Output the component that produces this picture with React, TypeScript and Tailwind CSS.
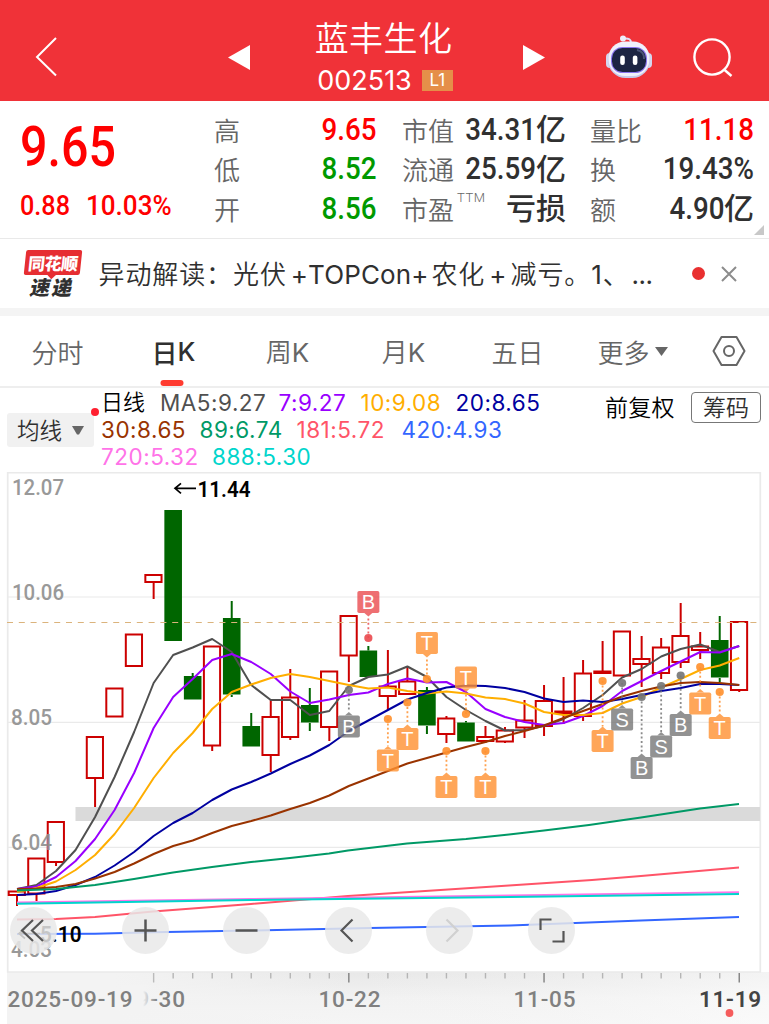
import type { ReactNode } from "react";

type Candle = { up: boolean; open: number; close: number; high?: number; low?: number };
type Marker = { i: number; y: number; dot: number; label: "B" | "S" | "T"; color: string };

const STEP = 19.52;
const px = (i: number) => 17 + i * STEP;

const r = (open: number, close: number, high?: number, low?: number): Candle => ({ up: true, open, close, high, low });
const g = (open: number, close: number, high?: number, low?: number): Candle => ({ up: false, open, close, high, low });

const candles: Candle[] = [
  r(891.5, 895, undefined, 906), r(858.5, 893.5, undefined, 901), r(822, 862, undefined, 866), r(781, 781),
  r(737, 778, undefined, 807), r(688.5, 716.5), r(634.5, 666), r(575, 582, undefined, 599), g(510, 641.5),
  g(676, 700, 673), r(646.5, 745.5, undefined, 751), g(618, 695, 601, 697), g(726, 747, 713),
  r(717, 755, 700, 772), r(697.5, 737, 669, 740), g(705, 723, 688, 731), r(671.5, 727, undefined, 741),
  r(616, 655.5, undefined, 682), g(650.5, 677.5, 646), r(686.5, 696, 650, 710), r(681.5, 694, 666),
  g(690, 726, 687, 734), r(718.5, 734, 716, 743), g(722.5, 742, 721), r(737, 741, 726, 743),
  r(730.5, 741.5, 727, 743), r(720.5, 727.5, 700, 738), r(701, 726, 685, 736), r(711.5, 713, 677, 724),
  r(673.5, 716, 660, 721), r(671.5, 673, 641), r(631.5, 675.5), r(659, 664, 636, 687), r(647.5, 673, 638, 679),
  r(636, 662, 603, 668), r(646.5, 650, 632, 659), g(640, 678, 616, 682), r(622, 690, undefined, 692),
];

const averages: { color: string; ys: number[] }[] = [
  { color: "#505050", ys: [889, 885, 871, 850, 817, 777, 732, 683, 655, 647.5, 639, 652, 685, 700, 700, 715, 711, 686, 677, 674.5, 666.5, 677, 697, 710, 721, 730.5, 730, 726, 719, 708, 695, 677.5, 669, 656.5, 649, 644.5, 652, 646] },
  { color: "#9900ff", ys: [889, 886.5, 877, 861, 839, 810, 773, 728, 697, 679, 660, 654, 662, 674, 691.5, 703, 699.5, 695, 692.5, 684, 678.5, 682.5, 682, 692, 709, 717, 722, 725, 723, 716, 706, 691, 681, 671, 661.5, 652, 652.5, 646] },
  { color: "#ffae00", ys: [892, 888, 881.5, 870, 855, 834, 808, 778, 753, 733, 709, 692, 684.5, 678, 674, 677, 681, 685, 688.5, 687.5, 691, 693.5, 691.5, 693.5, 697.5, 699, 703.5, 712, 715, 715, 713, 703.5, 697, 687.5, 679, 670, 665.5, 658] },
  { color: "#0000a0", ys: [895, 894, 891, 885, 877, 865.5, 852, 836, 823, 813, 800, 789.5, 782, 773.5, 764, 755.5, 745, 731, 720.5, 710, 699.5, 693, 687.5, 685.5, 686, 688, 692, 698.5, 702, 700.5, 702, 699, 695, 691, 688, 684, 684, 685] },
  { color: "#993300", ys: [889, 888.5, 887, 884, 878.5, 872, 863.5, 854, 846, 840.5, 833, 826, 821, 815.5, 809, 803, 795.5, 786, 778.5, 771, 763.5, 758, 752.5, 747, 742, 736, 731, 725.5, 718, 711, 704, 696.5, 691, 686.5, 683, 682, 683, 685] },
];

const longAverages = [
  { color: "#009966", points: "17,890.5 56,889 95,885 134,879 173,872.5 212,867 251,862 290,858 329,853.5 348,850.5 407,843.5 466,839 509,834.5 544,830.5 589,825 641,817.5 700,808.5 739,804" },
  { color: "#ff5468", points: "17,919.5 56,919 95,917 153,911.5 212,907 251,904 348,896 410,892 509,885.5 592,880 641,876 739,867.5" },
  { color: "#ff73e8", points: "17,902.5 251,899 510,895.5 739,892.3" },
  { color: "#00d5cc", points: "17,903.7 251,900 510,897 739,894" },
  { color: "#3366ff", points: "17,934 95,933.7 153,932.2 251,930.5 370,928 510,925.5 641,920.5 739,917" },
];

const ORANGE = "#ff9130";
const GRAY = "#777777";
const markers: Marker[] = [
  { i: 18, y: 602, dot: 638, label: "B", color: "#ea4c50" },
  { i: 21, y: 643, dot: 679, label: "T", color: ORANGE },
  { i: 23, y: 677.5, dot: 714, label: "T", color: ORANGE },
  { i: 17, y: 726.5, dot: 690, label: "B", color: GRAY },
  { i: 19, y: 760.5, dot: 719, label: "T", color: ORANGE },
  { i: 20, y: 739, dot: 702.5, label: "T", color: ORANGE },
  { i: 22, y: 787, dot: 751, label: "T", color: ORANGE },
  { i: 24, y: 787, dot: 751, label: "T", color: ORANGE },
  { i: 30, y: 741, dot: 681, label: "T", color: ORANGE },
  { i: 31, y: 719.5, dot: 683, label: "S", color: GRAY },
  { i: 32, y: 768, dot: 697, label: "B", color: GRAY },
  { i: 33, y: 746.5, dot: 686, label: "S", color: GRAY },
  { i: 34, y: 725, dot: 675.5, label: "B", color: GRAY },
  { i: 35, y: 703.5, dot: 667, label: "T", color: ORANGE },
  { i: 36, y: 728, dot: 692, label: "T", color: ORANGE },
];

function CandleShape({ i, c }: { i: number; c: Candle }) {
  const x = px(i);
  const color = c.up ? "#cc0000" : "#006600";
  return (
    <g stroke={color} strokeWidth={2}>
      {c.high !== undefined && <line x1={x} x2={x} y1={c.high} y2={c.open} />}
      {c.low !== undefined && <line x1={x} x2={x} y1={c.close} y2={c.low} />}
      {c.up ? (
        <rect x={x - 8.3} y={c.open} width={16.2} height={c.close - c.open} fill="#fff" />
      ) : (
        <rect x={x - 8.8} y={c.open} width={17.6} height={c.close - c.open - 0.5} fill={color} stroke="none" />
      )}
    </g>
  );
}

function MarkerShape({ m }: { m: Marker }) {
  const x = px(m.i);
  const above = m.y < m.dot;
  const edge = above ? m.y + 11 : m.y - 11;
  const tip = above ? edge + 3.5 : edge - 3.5;
  return (
    <g>
      <line x1={x} x2={x} y1={m.dot} y2={tip} stroke={m.color} strokeWidth={1.8} strokeDasharray="2 2.4" opacity={0.85} />
      <circle cx={x} cy={m.dot} r={4.1} fill={m.color} opacity={0.92} />
      <g fill={m.color} opacity={0.8}>
        <rect x={x - 11} y={m.y - 11} width={22} height={22} rx={1.8} />
        <path d={`M${x - 4} ${edge}L${x} ${tip}L${x + 4} ${edge}Z`} />
      </g>
      <text x={x} y={m.y + 7} textAnchor="middle" fontSize={20} fill="#fff" className="font-['Liberation_Sans',sans-serif]">
        {m.label}
      </text>
    </g>
  );
}

type ChartTextProps = { x: number; y: number; w: number; color: string; children: string; bold?: boolean; spaced?: boolean };

function ChartText({ x, y, w, color, children, bold, spaced }: ChartTextProps) {
  return (
    <text
      x={x}
      y={y}
      textLength={w}
      lengthAdjust={spaced ? "spacing" : "spacingAndGlyphs"}
      fontSize={22.5}
      fill={color}
      fontWeight={bold ? 600 : 500}
      className="font-[Roboto,sans-serif]"
    >
      {children}
    </text>
  );
}

function Chart() {
  return (
    <svg width="769" height="552" viewBox="0 472 769 552" className="block">
      <defs>
        <linearGradient id="axis" x1="0" y1="0" x2="0" y2="1">
          <stop offset="0" stopColor="#e8e8e8" />
          <stop offset="0.5" stopColor="#f2f2f2" />
          <stop offset="1" stopColor="#f5f5f5" />
        </linearGradient>
        <linearGradient id="axisFade" x1="0" y1="0" x2="1" y2="0">
          <stop offset="0" stopColor="#f3f3f3" />
          <stop offset="0.14" stopColor="#f3f3f3" />
          <stop offset="0.45" stopColor="#f3f3f3" stopOpacity="0" />
          <stop offset="1" stopColor="#fff" stopOpacity="0.5" />
        </linearGradient>
        <linearGradient id="dateFade" x1="0" y1="0" x2="1" y2="0">
          <stop offset="0.6" stopColor="#f3f3f3" />
          <stop offset="1" stopColor="#f3f3f3" stopOpacity="0" />
        </linearGradient>
      </defs>
      <rect x="7" y="972" width="762" height="52" fill="url(#axis)" />
      <rect x="7" y="972" width="762" height="52" fill="url(#axisFade)" />
      <g stroke="#eaeaea">
        <path d="M7 597H760M7 722.3H760M7 847.3H760" strokeWidth="1.2" />
        <path d="M7.7 472.6H760.3V972H7.7Z" fill="none" strokeWidth="1.7" />
      </g>
      {candles.map((c, i) => <CandleShape key={i} i={i} c={c} />)}
      <rect x="75.5" y="807" width="684.5" height="14" fill="#dadada" />
      <line x1="7" x2="760" y1="622.5" y2="622.5" stroke="#dbb37c" strokeWidth="1.1" strokeDasharray="6 5.8" />
      <g fill="none" strokeWidth="2" strokeLinejoin="round">
        {averages.map((a) => (
          <polyline key={a.color} stroke={a.color} points={a.ys.map((y, i) => `${px(i)},${y}`).join(" ")} />
        ))}
        {longAverages.map((a) => <polyline key={a.color} stroke={a.color} points={a.points} />)}
      </g>
      {markers.map((m) => <MarkerShape key={m.i} m={m} />)}

      <g opacity="0.9">
        <ChartText x={12} y={494.5} w={52} color="#8f8f8f">12.07</ChartText>
        <ChartText x={12} y={600} w={52} color="#8f8f8f">10.06</ChartText>
        <ChartText x={11} y={725} w={41} color="#8f8f8f">8.05</ChartText>
        <ChartText x={11} y={850} w={41} color="#8f8f8f">6.04</ChartText>
        <ChartText x={11} y={956.5} w={41} color="#8f8f8f">4.03</ChartText>
      </g>
      <path d="M196 488.3H175M181 483.3L175 488.3L181 493.3" fill="none" stroke="#000" strokeWidth="1.7" />
      <ChartText x={197.5} y={496.5} w={53} color="#000" bold>11.44</ChartText>
      <path d="M40 933.5H19M25 928.5L19 933.5L25 938.5" fill="none" stroke="#000" strokeWidth="1.7" />
      <ChartText x={40} y={941.5} w={41.5} color="#000" bold>5.10</ChartText>

      <g strokeWidth="1.4">
        {candles.map((_, i) =>
          i < 7 ? null : (
            <line key={i} x1={px(i)} x2={px(i)} y1={973} y2={i % 10 === 7 ? 982.5 : 978.5} stroke={i === 7 ? "#bbbbbb" : i % 10 === 7 ? "#808080" : "#b5b5b5"} />
          ),
        )}
      </g>
      <ChartText x={123} y={1006.5} w={62} color="#808080" spaced>09-30</ChartText>
      <rect x="122" y="985" width="35" height="28" fill="url(#dateFade)" />
      <ChartText x={7.5} y={1007} w={125} color="#808080" spaced>2025-09-19</ChartText>
      <ChartText x={318.5} y={1006.5} w={62} color="#808080" spaced>10-22</ChartText>
      <ChartText x={513.5} y={1006.5} w={62} color="#808080" spaced>11-05</ChartText>
      <ChartText x={699} y={1006.5} w={62} color="#444444" bold spaced>11-19</ChartText>
      <circle cx="729.5" cy="1013" r="3.9" fill="#f55c5c" />
    </svg>
  );
}

function RoundButton({ children, className = "" }: { children: ReactNode; className?: string }) {
  return (
    <button className={`size-[47px] shrink-0 rounded-full bg-[#e9e9e9]/85 ${className}`}>
      <svg viewBox="0 0 47 47" className="size-full" fill="none" stroke="#555" strokeWidth="2.2">
        {children}
      </svg>
    </button>
  );
}

function Controls() {
  return (
    <div className="absolute left-[10px] top-[434.500px] flex gap-[54.500px]">
      <RoundButton className="mr-[10px]">
        <path d="M23 13L12 23.500L23 34M33 13L22 23.500L33 34" />
      </RoundButton>
      <RoundButton><path d="M12.500 23.500H34.500M23.500 12.500V34.500" strokeWidth="2.500" /></RoundButton>
      <RoundButton><path d="M12.500 23.500H34.500" strokeWidth="2.500" /></RoundButton>
      <RoundButton><path d="M27.500 12.500L16.500 23.500L27.500 34.500" /></RoundButton>
      <RoundButton><path d="M20.500 12.500L31.500 23.500L20.500 34.500" stroke="#d0d0d0" /></RoundButton>
      <RoundButton><path d="M12.500 23V12.500H23.500M24.500 34.500H35.500V24" /></RoundButton>
    </div>
  );
}

function Robot() {
  return (
    <svg width="48" height="44" viewBox="0 0 48 44">
      <path d="M19 3.500C24 3 26 4.500 26 8" fill="none" stroke="#dfe0f7" strokeWidth="2" />
      <circle cx="18" cy="3.500" r="3" fill="#eeeefa" />
      <rect x="1" y="18" width="8" height="15" rx="4" fill="#d5d6ef" />
      <rect x="39" y="18" width="8" height="15" rx="4" fill="#d5d6ef" />
      <rect x="3" y="7" width="42" height="36" rx="17.500" fill="#c8cae9" />
      <rect x="3.500" y="6.500" width="41" height="34.500" rx="16.500" fill="#f0f0fb" />
      <rect x="6" y="12" width="36" height="26" rx="11.500" fill="#8a75ee" />
      <rect x="7" y="13" width="34" height="24" rx="10.500" fill="#1c2442" />
      <path d="M32 15C37 16 39.500 19 39 24" stroke="#4a5476" strokeWidth="2" fill="none" />
      <rect x="15.200" y="20.500" width="4.600" height="9.500" rx="2.200" fill="#fff" />
      <rect x="27.800" y="20.500" width="4.600" height="9.500" rx="2.200" fill="#fff" />
    </svg>
  );
}

function Header() {
  return (
    <header className="flex h-[101px] items-center bg-[#f03238] text-white">
      <svg width="22" height="40" viewBox="0 0 22 40" className="ml-[35px] mt-[12px]" fill="none" stroke="#fff" strokeWidth="2">
        <path d="M21 1L2 20L21 38.500" />
      </svg>
      <svg width="22" height="25" viewBox="0 0 22 25" className="ml-[171px] mt-[13px]">
        <path d="M0 12.500L22 0V25Z" fill="#fff" />
      </svg>
      <div className="ml-[53px] flex w-[163px] flex-col items-center pt-[11px]">
        <div className="-ml-[2px] whitespace-nowrap text-[34px] font-[350] leading-[44px] tracking-[0.400px]">蓝丰生化</div>
        <div className="flex items-center gap-[10px] pl-[1px] pt-[5px]">
          <span className="font-[Inter,sans-serif] text-[27px] leading-[34px] tracking-normal">002513</span>
          <span className="flex h-[21px] w-[31px] items-center justify-center bg-[#e58f49] font-[Inter,sans-serif] text-[17px]">L1</span>
        </div>
      </div>
      <svg width="22" height="25" viewBox="0 0 22 25" className="ml-[57px] mt-[13px]">
        <path d="M0 0L22 12.500L0 25Z" fill="#fff" />
      </svg>
      <div className="ml-[60px] mt-[12px]"><Robot /></div>
      <svg width="40" height="40" viewBox="0 0 40 40" className="ml-[40px] mt-[15px]" fill="none" stroke="#fff" strokeWidth="2.400">
        <circle cx="19" cy="19" r="17.600" />
        <path d="M30.500 31L38.500 38" />
      </svg>
    </header>
  );
}

function Row({ label, sup, num, unit, color }: { label: string; sup?: string; num?: string; unit?: string; color: string }) {
  return (
    <div className="flex h-[39.500px] items-center justify-between whitespace-nowrap leading-[32px]">
      <span className="flex text-[26px] font-[350] text-[#666]">
        {label}
        {sup && <span className="ml-[3px] -mt-[3px] font-[Roboto,sans-serif] text-[13px] leading-[16px] tracking-[0.600px]">{sup}</span>}
      </span>
      <span className={`flex items-center ${color}`}>
        {num && <span className="origin-right scale-x-[.895] font-[Roboto,sans-serif] text-[31px] font-medium">{num}</span>}
        {unit && <span className="-mt-[5px] text-[30px] font-medium">{unit}</span>}
      </span>
    </div>
  );
}

function Quote() {
  return (
    <section className="relative flex h-[138px] border-b border-[#e9e9e9] pt-[9px] text-[#ff0000]">
      <div className="w-[214px] pl-[20px] font-[Roboto,sans-serif] font-medium">
        <div className="origin-left scale-x-[.88] text-[55px] leading-[74px]">9.65</div>
        <div className="flex text-[28px] leading-[43px]">
          <span className="w-[66px] origin-left scale-x-[.9]">0.88</span>
          <span className="origin-left scale-x-[.93]">10.03%</span>
        </div>
      </div>
      <div className="w-[162.500px]">
        <Row label="高" num="9.65" color="text-[#ff0000]" />
        <Row label="低" num="8.52" color="text-[#009900]" />
        <Row label="开" num="8.56" color="text-[#009900]" />
      </div>
      <div className="ml-[25.500px] w-[164px]">
        <Row label="市值" num="34.31" unit="亿" color="text-[#303030]" />
        <Row label="流通" num="25.59" unit="亿" color="text-[#303030]" />
        <Row label="市盈" sup="TTM" unit="亏损" color="text-[#303030]" />
      </div>
      <div className="ml-[24px] w-[164px]">
        <Row label="量比" num="11.18" color="text-[#ff0000]" />
        <Row label="换" num="19.43%" color="text-[#303030]" />
        <Row label="额" num="4.90" unit="亿" color="text-[#303030]" />
      </div>
      <svg width="10" height="10" className="absolute bottom-[3px] right-[5px]"><path d="M10 0V10H0Z" fill="#c8c8c8" /></svg>
    </section>
  );
}

function News() {
  return (
    <section className="flex h-[77px] items-center border-b-8 border-[#f4f4f4] bg-white">
      <div className="ml-[23px] flex w-[60px] flex-col items-center">
        <div className="relative flex h-[25px] w-[56px] -skew-x-6 items-center justify-center rounded-[2px] bg-[#e62e32] text-[17px] font-black leading-none tracking-[-0.500px] text-white">
          同花顺
          <span className="absolute -bottom-[3px] size-[6px] rotate-45 bg-[#e62e32]" />
        </div>
        <div className="-skew-x-12 pt-[2px] text-[20px] font-black leading-[20px] tracking-[2px] text-[#303030]">速递</div>
      </div>
      <p className="ml-[15.500px] w-[557.500px] whitespace-nowrap text-[26px] font-[350] tracking-[0.900px] text-[#303030]">
        异动解读：光伏
        <span className="ml-[4px] font-[Inter,sans-serif] font-normal tracking-[0.100px]">+TOPCon+</span>
        <span className="ml-[3px]">农化</span>
        <span className="mx-[4px] font-[Inter,sans-serif] font-normal tracking-normal">+</span>减亏。
        <span className="font-[Inter,sans-serif] font-normal">1</span>、
        <span className="ml-[2px] font-[Inter,sans-serif] font-normal tracking-[-0.500px]">...</span>
      </p>
      <span className="ml-[36px] size-[13px] rounded-full bg-[#e93030]" />
      <svg width="16" height="16" viewBox="0 0 16 16" className="ml-[16px]" stroke="#8c8c8c" strokeWidth="2"><path d="M1 1L15 15M15 1L1 15" /></svg>
    </section>
  );
}

function Tabs() {
  return (
    <nav className="grid h-[72px] grid-cols-[repeat(6,115px)_77px] items-center justify-items-center border-b-2 border-[#eeeeee] text-[26px] font-[350] text-[#666]">
      <span>分时</span>
      <span className="relative flex h-full items-center pl-[2px] font-medium text-[#303030]">
        日<span className="font-[Inter,sans-serif]">K</span>
        <i className="absolute bottom-0 left-1/2 h-[6px] w-[23px] -translate-x-1/2 rounded-[3px] bg-[#ff3b30]" />
      </span>
      <span>周<span className="font-[Inter,sans-serif] font-normal">K</span></span>
      <span className="pl-[2px]">月<span className="font-[Inter,sans-serif] font-normal">K</span></span>
      <span>五日</span>
      <span className="flex items-center gap-[5px]">
        更多
        <svg width="13" height="9"><path d="M0 0H13L6.500 9Z" fill="#666" /></svg>
      </span>
      <svg width="34" height="30" viewBox="0 0 34 30" fill="none" stroke="#666" strokeWidth="2">
        <path d="M9.500 1H24.500L32.500 15L24.500 29H9.500L1.500 15Z" strokeLinejoin="round" />
        <circle cx="17" cy="15" r="5" />
      </svg>
    </nav>
  );
}

function Legend() {
  return (
    <section className="flex h-[84px] whitespace-nowrap">
      <button className="relative ml-[7px] mt-[25px] flex h-[34px] w-[87px] items-center rounded-[3px] bg-[#f1f1f1] pb-[1px] pl-[10px] text-[22.500px] font-[350] leading-none text-[#303030]">
        均线
        <svg width="12" height="9" className="ml-[10px] mt-px"><path d="M0 0H12L7 8.500H5Z" fill="#666" /></svg>
        <i className="absolute -right-[5px] -top-[5px] size-[8px] rounded-full bg-[#ff2030]" />
      </button>
      <div className="ml-[7px] flex w-[504px] flex-col pt-[1px] font-[Inter,sans-serif] text-[22.500px] leading-[27.200px] tracking-[0.500px]">
        <div className="flex">
          <span className="-mt-[2px] w-[59px] font-['Noto_Sans_CJK_SC',sans-serif] text-[22px] font-[350] tracking-normal text-black">日线</span>
          <span className="w-[118.500px] text-[#505050]">MA5:9.27</span>
          <span className="w-[82px] text-[#9900ff]">7:9.27</span>
          <span className="w-[95px] text-[#ffae00]">10:9.08</span>
          <span className="text-[#0000a0]">20:8.65</span>
        </div>
        <div className="flex">
          <span className="w-[98.500px] text-[#993300]">30:8.65</span>
          <span className="w-[97px] text-[#009966]">89:6.74</span>
          <span className="w-[105px] text-[#ff5468]">181:5.72</span>
          <span className="text-[#3366ff]">420:4.93</span>
        </div>
        <div className="flex">
          <span className="w-[111px] text-[#ff73e8]">720:5.32</span>
          <span className="text-[#00d5cc]">888:5.30</span>
        </div>
      </div>
      <span className="mt-[4px] w-[86px] text-[23px] font-[350] leading-[28px] tracking-[0.300px] text-black">前复权</span>
      <button className="mt-[4px] flex h-[31px] w-[70px] items-center justify-center rounded-[4px] border border-[#777] pb-[2px] text-[23px] font-[350] leading-none text-[#303030]">筹码</button>
    </section>
  );
}

export default function App() {
  return (
    <main className="h-[1024px] w-[769px] overflow-hidden bg-white font-['Noto_Sans_CJK_SC',sans-serif]">
      <Header />
      <Quote />
      <News />
      <Tabs />
      <Legend />
      <section className="relative h-[552px]">
        <Chart />
        <Controls />
      </section>
    </main>
  );
}
